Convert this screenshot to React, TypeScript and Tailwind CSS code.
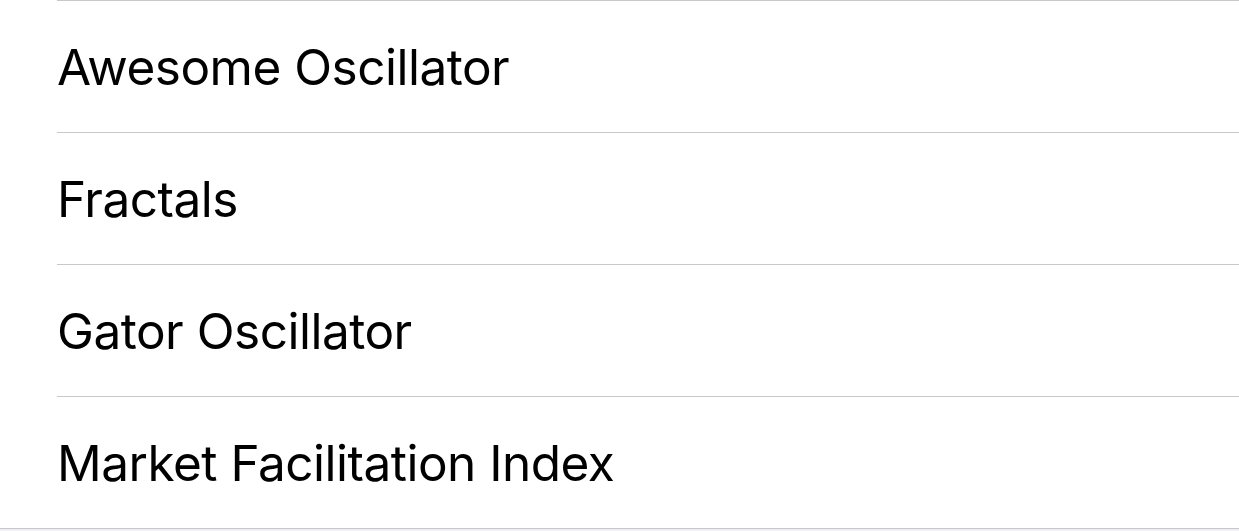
const items = ["Awesome Oscillator", "Fractals", "Gator Oscillator", "Market Facilitation Index"];

export default function App() {
  return (
    <div className="min-h-screen bg-[#efeff4]" style={{ fontFamily: "Inter, 'Noto Sans', sans-serif" }}>
      <div className="bg-white border-b border-[#c8c7cc]">
        {items.map(name => (
          <div key={name} className="pl-[57px]">
            <div className="h-[132px] border-t border-[#c8c7cc] flex items-center pt-[3px]">
              <span className="text-[49.5px] leading-none text-black tracking-[-0.5px]">{name}</span>
            </div>
          </div>
        ))}
      </div>
    </div>
  );
}
